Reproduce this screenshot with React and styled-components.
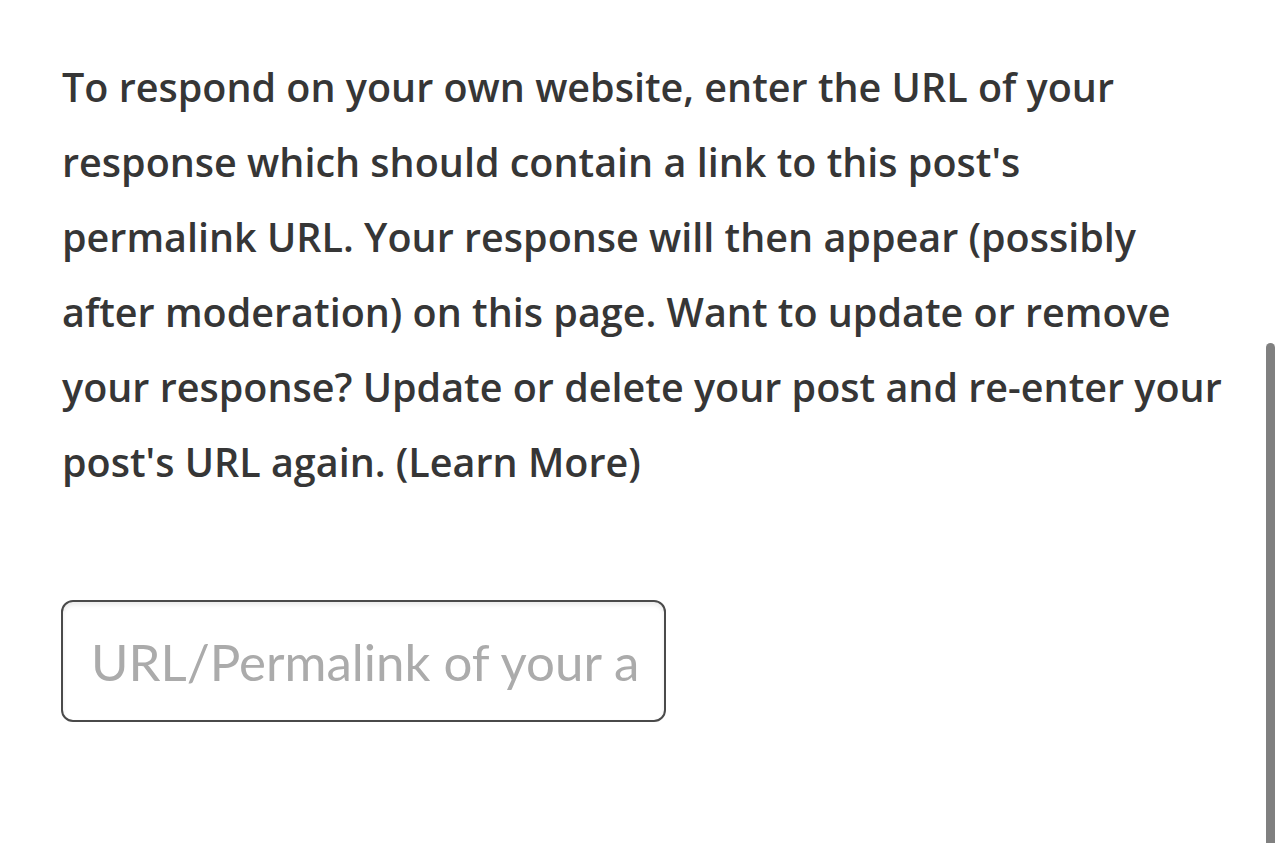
import React from 'react';
import styled, { createGlobalStyle } from 'styled-components';

const GlobalStyle = createGlobalStyle`
  html, body {
    margin: 0;
    padding: 0;
    background: #fff;
    overflow: hidden;
  }
`;

const lines = [
    "To respond on your own website, enter the URL of your",
    "response which should contain a link to this post's",
    "permalink URL. Your response will then appear (possibly",
    "after moderation) on this page. Want to update or remove",
    "your response? Update or delete your post and re-enter your",
    "post's URL again. (Learn More)",
];

export default function App() {
    return (
        <>
            <GlobalStyle/>
            <Page>
                <Intro>
                    {lines.map((line, i) => (
                        <React.Fragment key={i}>
                            {line}
                            {i < lines.length - 1 ? <br/> : null}
                        </React.Fragment>
                    ))}
                </Intro>
                <UrlInput type="url" placeholder="URL/Permalink of your article"/>
            </Page>
            <ScrollThumb/>
        </>
    );
}

const Page = styled.main`
  padding: 50px 0 0 62px;
  display: flex;
  flex-direction: column;
  align-items: flex-start;
`;

const Intro = styled.p`
  margin: 0;
  font-family: 'Open Sans', Lato, sans-serif;
  font-weight: 600;
  font-size: 39.5px;
  line-height: 75px;
  color: #363636;
  white-space: nowrap;
`;

const UrlInput = styled.input`
  margin: 100px 0 0 -1px;
  box-sizing: border-box;
  width: 605px;
  height: 122px;
  border: 2.7px solid #4a4a4a;
  border-radius: 12px;
  box-shadow: inset 0 3px 4px rgba(0, 0, 0, 0.08);
  padding: 0 26px 0 28px;
  font-family: Lato, 'Open Sans', sans-serif;
  font-size: 51px;
  color: #333;
  outline: none;
  &::placeholder {
    color: #ababab;
  }
`;

const ScrollThumb = styled.div`
  position: fixed;
  right: 9px;
  top: 343px;
  bottom: 0;
  width: 9px;
  border-radius: 5px 5px 0 0;
  background: #808080;
`;
